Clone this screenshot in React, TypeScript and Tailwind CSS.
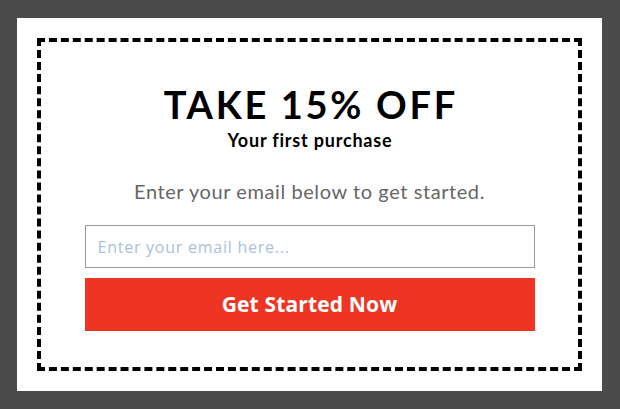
import React from "react";

export default function App() {
  return (
    <div className="w-[620px] h-[409px] bg-[#4b4b4b] pt-[18px] pb-[18px] pl-[17px] pr-[18px]">
      <div className="h-full w-full bg-white p-5">
        <div className="h-full w-full border-4 border-dashed border-black flex flex-col items-center pt-[43px] font-['Lato','Open_Sans',sans-serif]">
          <h1 className="text-[38px] leading-[38px] font-bold text-black tracking-[2.7px] pl-[2.7px]">
            TAKE 15% OFF
          </h1>
          <p className="mt-[8px] text-[18px] leading-[18px] font-bold text-black tracking-[0.8px] pl-[0.8px]">
            Your first purchase
          </p>
          <p className="mt-[32px] text-[20px] leading-[20px] text-[#666666] tracking-[0.58px]">
            Enter your email below to get started.
          </p>
          <input
            type="email"
            placeholder="Enter your email here..."
            className="mt-[24px] w-[450px] h-[43px] border border-[#9a9a9a] pl-[12px] text-[16px] tracking-[0.75px] outline-none placeholder:text-[#a9c1dc] bg-white font-['Open_Sans',sans-serif]"
          />
          <button className="mt-[10px] w-[450px] h-[53px] bg-[#ee3524] text-white text-[21px] font-bold tracking-[0.15px] font-['Open_Sans',sans-serif]">
            Get Started Now
          </button>
        </div>
      </div>
    </div>
  );
}
